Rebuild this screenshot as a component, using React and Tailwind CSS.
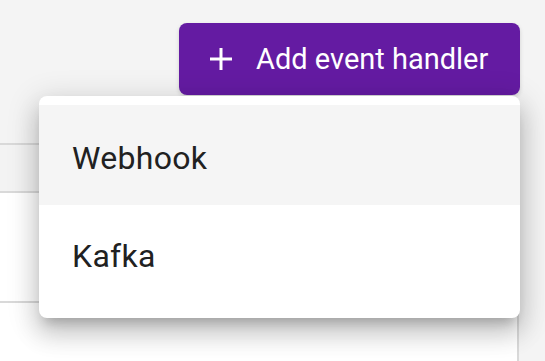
const App = () => {
  return (
    <div className="relative h-[361px] w-[545px] overflow-hidden bg-[#f4f4f4]" style={{ fontFamily: 'Roboto, "Liberation Sans", sans-serif' }}>
      {/* Toolbar */}
      <div className="flex h-[143px] justify-end pr-[25px] pt-[23px]">
        <div className="relative h-[72px]">
          <button className="flex h-[72px] w-[341px] items-center rounded-[8px] bg-[#641ba2] pl-[31px] text-white shadow-[0_2px_4px_rgba(0,0,0,0.15)]">
            <svg width="22" height="22" viewBox="0 0 22 22" fill="none" stroke="currentColor" strokeWidth="3">
              <path d="M11 0v22M0 11h22" />
            </svg>
            <span className="ml-[24px] text-[29px] font-normal leading-none">Add event handler</span>
          </button>

          {/* Dropdown menu */}
          <div className="absolute right-0 top-[73px] z-10 w-[481px] rounded-[8px] bg-white pb-[13px] pt-[9px] shadow-[0_10px_12px_-6px_rgba(0,0,0,0.2),0_16px_24px_2px_rgba(0,0,0,0.14),0_6px_30px_5px_rgba(0,0,0,0.12)]">
            <div className="flex h-[100px] items-center bg-[#f5f5f5] px-[33px] pt-[6px] text-[32px] text-[#212121] tracking-[0.3px]">Webhook</div>
            <div className="flex h-[100px] items-center px-[33px] pt-[2px] text-[32px] text-[#212121] tracking-[0.3px]">Kafka</div>
          </div>
        </div>
      </div>

      {/* Table card behind */}
      <div className="mr-[26px] border-r-2 border-t-2 border-[#d9d9d9] bg-white">
        <div className="h-[48px] border-b-2 border-[#d9d9d9] bg-[#f3f3f3]"></div>
        <div className="h-[110px] border-b-2 border-[#d9d9d9]"></div>
        <div className="h-[80px]"></div>
      </div>
    </div>
  );
};

export default App;
